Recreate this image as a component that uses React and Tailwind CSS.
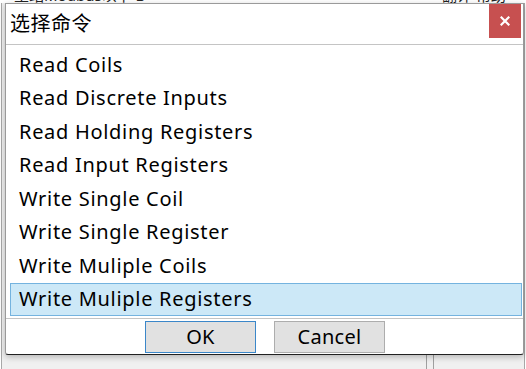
import React from "react";

const commands = [
  "Read Coils",
  "Read Discrete Inputs",
  "Read Holding Registers",
  "Read Input Registers",
  "Write Single Coil",
  "Write Single Register",
  "Write Muliple Coils",
  "Write Muliple Registers",
];

const font = { fontFamily: '"Noto Sans", "Noto Sans CJK SC", sans-serif' };

function App() {
  const selected = commands.length - 1;

  return (
    <div
      className="relative w-[526px] h-[369px] overflow-hidden bg-[#f0f0f0] text-black"
      style={font}
    >
      {/* window behind the dialog */}
      <div className="h-[3px] overflow-hidden bg-white">
        <div className="flex justify-between pl-[14px] pr-[20px] -mt-[13px] text-[15px] leading-[16px] text-[#222]">
          <span>主站Modbus以下 B</span>
          <span>翻译 帮助</span>
        </div>
      </div>
      <div className="absolute left-0 top-[3px] bottom-0 w-[2px] border-r border-[#a8a8a8] bg-white" />
      <div className="absolute right-0 top-[3px] bottom-0 w-[2px] border-l border-[#a8a8a8] bg-white" />
      <div className="absolute left-[426px] top-[355px] bottom-0 w-[8px] border-x border-[#a0a0a0]" />

      {/* dialog */}
      <div className="absolute left-[5px] top-[3px] w-[519px] h-[352px] flex flex-col bg-white border border-[#9a9a9a] border-b-[#202020] rounded-b-[3px] shadow-[0_2px_6px_rgba(0,0,0,0.25)]">
        <div className="h-[41px] flex justify-between items-start border-b border-[#c4c4c4]">
          <span className="pl-[4px] pt-[7px] text-[20px] leading-[26px] tracking-[0.5px]">选择命令</span>
          <button className="mr-[2px] w-[32px] h-[34px] bg-[#c75050] flex items-center justify-center">
            <svg width="10" height="10" viewBox="0 0 10 10">
              <path d="M1.5 1.5 L8.5 8.5 M8.5 1.5 L1.5 8.5" stroke="white" strokeWidth="2.2" strokeLinecap="square" />
            </svg>
          </button>
        </div>

        <ul className="pt-[3px] pl-[4px] pr-[1px] h-[274px] border-b border-[#c4c4c4]">
          {commands.map((c, i) => (
            <li
              key={c}
              className={`h-[33.5px] flex items-center pl-[8px] text-[20px] leading-none tracking-[0.7px] border ${
                i === selected
                  ? "bg-[#cce8f7] border-[#74b3df]"
                  : "border-transparent"
              }`}
            >
              {c}
            </li>
          ))}
        </ul>

        <div className="flex gap-[18px] pl-[139px] pt-[2px]">
          <button className="w-[111px] h-[32px] bg-[#e1e1e1] border border-[#3b87c9] text-[20px] leading-none tracking-[0.3px]">
            OK
          </button>
          <button className="w-[111px] h-[32px] bg-[#e1e1e1] border border-[#adadad] text-[20px] leading-none tracking-[0.3px]">
            Cancel
          </button>
        </div>
      </div>
    </div>
  );
}

export default App;
